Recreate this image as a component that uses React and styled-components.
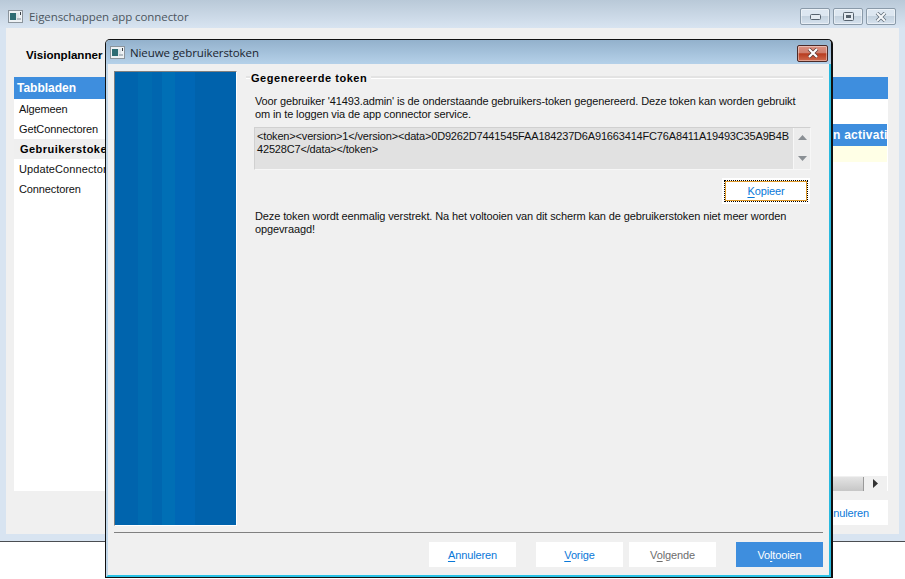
import React from "react";
import styled, { createGlobalStyle } from "styled-components";

const Global = createGlobalStyle`
  html, body { margin: 0; padding: 0; background: #fff; overflow: hidden; }
  #root { width: 905px; height: 579px; position: relative; overflow: hidden; }
  * { box-sizing: border-box; }
`;
const uiFont = `"Liberation Sans", Arial, sans-serif`;
const titleFont = `"Open Sans", "Noto Sans", sans-serif`;

const Page = styled.div`
  width: 905px; height: 579px; position: relative; background: #fff;
  font-family: ${uiFont}; font-size: 11px; letter-spacing: -0.12px; color: #111;
`;
const OuterWindow = styled.div`
  width: 905px; height: 542px; display: flex; flex-direction: column;
  background: #d8e4f1; border-bottom: 1px solid #4a4d52;
`;
const TitleBar = styled.div`
  height: 28px; flex: none; display: flex; align-items: center;
  background: linear-gradient(#b9c9d8, #d8e4f1);
  padding: 5px 9px 0 8px;
`;
const TitleText = styled.span`
  font-family: ${titleFont}; font-size: 11.5px; letter-spacing: -0.08px; margin-left: 6px; color: #4c5660; flex: 1;
`;
const Controls = styled.div`display: flex; gap: 3px;`;
const Ctrl = styled.div`
  width: 30px; height: 17px; border: 1px solid #8a9aa9; border-radius: 2px;
  background: linear-gradient(#dde7f1 45%, #c4d2df 50%, #d6e2ee);
  display: flex; align-items: center; justify-content: center;
  box-shadow: inset 0 0 0 1px rgba(255,255,255,.45);
`;
const OuterBody = styled.div`
  flex: 1; margin: 0 6px 7px; background: #f0f0f0;
  padding: 0 11px 9px 8px; display: flex; flex-direction: column;
`;
const PlannerLabel = styled.div`
  height: 49px; padding: 20px 0 0 12px; font-weight: 700; font-size: 11.6px; letter-spacing: 0; color: #000; line-height: 14px;
`;
const Panels = styled.div`
  height: 414px; background: #fff; display: flex; flex-direction: column; position: relative;
`;
const BlueHead = styled.div`
  height: 22px; flex: none; background: #3e8ede; color: #fff; font-weight: 700;
  font-size: 12px; letter-spacing: 0; line-height: 22px; padding-left: 3px;
`;
const Columns = styled.div`flex: 1; display: flex; min-height: 0;`;
const TabList = styled.div`width: 90px; flex: none; display: flex; flex-direction: column;`;
const Tab = styled.div`
  height: 20px; line-height: 20px; padding-left: 5px; white-space: nowrap; color: #111;
  ${p => p.$spread && `letter-spacing: 0.1px;`}
  ${p => p.$active && `background: #efefef; font-weight: 700; color: #000; letter-spacing: 0.45px; padding-left: 6px; margin-right: -30px;`}
`;
const GridArea = styled.div`flex: 1; display: flex; flex-direction: column; padding: 25px 0 0 728px; min-width: 0;`;
const GridHead = styled.div`
  height: 22px; flex: none; background: #3e8ede; color: #fff; font-weight: 700; font-size: 12px;
  letter-spacing: 0.25px; line-height: 22px; white-space: nowrap; overflow: hidden; margin-right: 1px; padding-left: 1px;
`;
const GridRow = styled.div`height: 16px; flex: none; background: #ffffe6; margin-right: 1px;`;
const GridFill = styled.div`flex: 1;`;
const HScroll = styled.div`
  height: 15px; flex: none; margin-right: 1px; background: #f0f0f0; display: flex; align-items: center;
`;
const HThumb = styled.div`
  flex: 1; height: 14px; background: linear-gradient(#e4e4e4, #c6c6c6); border-right: 1px solid #9a9a9a;
`;
const HArrow = styled.div`width: 23px; display: flex; align-items: center; justify-content: center;`;
const OuterFooter = styled.div`
  margin-top: 9px; height: 25px; display: flex; justify-content: flex-end;
`;
const Button = styled.div`
  width: 87px; height: 25px; display: flex; align-items: center; justify-content: center;
  background: ${p => p.$primary ? "#3e8ede" : "#fff"};
  color: ${p => p.$primary ? "#fff" : p.$disabled ? "#6d6d6d" : "#0a78d8"};
  u { text-underline-offset: 2px; }
`;

const Modal = styled.div`
  position: absolute; left: 105px; top: 39px; width: 728px; height: 539px;
  border: 1px solid #111; border-width: 1px 2px 1px 1px; border-radius: 5px 5px 0 0;
  display: flex; flex-direction: column;
  background: #f0f0f0;
`;
const ModalTitle = styled.div`
  height: 24px; flex: none; display: flex; align-items: center;
  background: linear-gradient(#93b1cc, #b5d1e9);
  border-radius: 4px 4px 0 0; padding: 0 3px 0 4px;
`;
const ModalTitleText = styled.span`
  font-family: ${titleFont}; font-size: 11.5px; letter-spacing: -0.1px; margin-left: 5px; color: #1b2530; flex: 1;
`;
const RedClose = styled.div`
  width: 31px; height: 17px; margin-top: 2px; border: 1px solid #4b2a28; border-radius: 2px;
  background: linear-gradient(#dc9182 0, #cf7e6c 45%, #b83c1f 52%, #cf6a4e 100%);
  box-shadow: inset 0 0 0 1px rgba(255,255,255,.4);
  display: flex; align-items: center; justify-content: center;
`;
const ModalInner = styled.div`
  flex: 1; display: flex; flex-direction: column; min-height: 0;
  border-left: 2px solid #c3d8ea; border-right: 2px solid #29b9de; border-bottom: 2px solid #29c3e6;
`;
const WizardBody = styled.div`
  height: 468px; flex: none; display: flex; padding: 7px 6px 0 6px;
`;
const Banner = styled.div`
  width: 123px; height: 455px; flex: none; border: 1px solid; border-color: #808080 #fff #fff #808080;
  background: linear-gradient(90deg,
    #0064ad 0 23px, #006bb0 23px 37px, #0066af 37px 47px, #006fb5 47px 60px,
    #0067b5 60px 80px, #0062ac 80px);
`;
const Content = styled.div`flex: 1; padding: 0 0 0 9px; min-width: 0; display: flex; flex-direction: column;`;
const GroupHead = styled.div`
  display: flex; align-items: center; height: 13px; gap: 1px;
  &::before { content: ""; width: 4px; height: 2px; background: #e3e3e3; border-bottom: 1px solid #fff; }
  &::after { content: ""; flex: 1; height: 2px; background: #e3e3e3; border-bottom: 1px solid #fff; margin-left: 3px; }
`;
const GroupTitle = styled.span`font-weight: 700; font-size: 11px; letter-spacing: 0.55px; color: #000;`;
const Para = styled.p`
  margin: ${p => p.$mt || 0}px 0 0 9px; line-height: 13px; color: #111; white-space: pre;
`;
const TokenBox = styled.div`
  margin: 6px 12px 0 8px; height: 43px; display: flex; background: #e1e1e1;
  border: 1px solid; border-color: #d0d0d0 #f7f7f7 #f7f7f7 #d0d0d0;
`;
const TokenText = styled.div`
  flex: 1; padding: 2px 0 0 2px; line-height: 13px; color: #111; white-space: pre; min-width: 0; letter-spacing: -0.17px;
`;
const VScroll = styled.div`
  width: 17px; flex: none; background: #ececec; border-left: 1px solid #f7f7f7;
  display: flex; flex-direction: column; align-items: center; justify-content: space-between; padding: 7px 0 8px;
`;
const FocusRow = styled.div`display: flex; justify-content: flex-end; margin: 10px 15px 0 0;`;
const FocusButton = styled.div`
  width: 84px; height: 22px; background: #fff; color: #0a78d8; outline: 2px solid #fff;
  border: 1px dotted #000; box-shadow: 0 0 0 1px #e09a2a inset;
  display: flex; align-items: center; justify-content: center;
  u { text-underline-offset: 2px; }
`;
const Separator = styled.div`
  height: 1px; flex: none; background: #808080; margin: 0 6px;
`;
const WizardFooter = styled.div`
  flex: 1; display: flex; justify-content: flex-end; padding: 9px 6px 0 0;
`;
const GapButton = styled(Button)`margin-left: ${p => p.$ml || 0}px;`;

const WinIcon = () => (
  <svg width="15" height="13" viewBox="0 0 15 13">
    <rect x="0.5" y="0.5" width="14" height="12" fill="#eef2f5" stroke="#8b949c" />
    <rect x="2" y="3" width="6" height="7" fill="#2e6c73" />
    <rect x="8" y="3" width="3" height="7" fill="#dfe6ea" />
    <rect x="12" y="2" width="1" height="3" fill="#3a3f45" />
    <rect x="9" y="8" width="4" height="2" fill="#b4bdc4" />
  </svg>
);
const XGlyph = ({ color = "#fff", stroke = "#555" }) => (
  <svg width="12" height="10" viewBox="0 0 12 10">
    <path d="M2 1l8 8M10 1L2 9" fill="none" stroke={stroke} strokeWidth="3.6" />
    <path d="M2 1l8 8M10 1L2 9" fill="none" stroke={color} strokeWidth="2.2" />
  </svg>
);
const Tri = ({ dir }) => (
  <svg width="9" height="5" viewBox="0 0 9 5">
    <path d={dir === "up" ? "M4.5 0L9 5H0z" : "M0 0h9L4.5 5z"} fill="#8a8f94" />
  </svg>
);

export default function App() {
  return (
    <Page>
      <Global />
      <OuterWindow>
        <TitleBar>
          <WinIcon />
          <TitleText>Eigenschappen app connector</TitleText>
          <Controls>
            <Ctrl>
              <svg width="11" height="6" viewBox="0 0 11 6"><rect x=".5" y=".5" width="10" height="5" rx="1" fill="#e4ebf2" stroke="#56626e" /></svg>
            </Ctrl>
            <Ctrl>
              <svg width="11" height="9" viewBox="0 0 11 9"><rect x=".5" y=".5" width="10" height="8" rx="1" fill="#e4ebf2" stroke="#56626e" /><rect x="3" y="3" width="5" height="3" fill="#56626e" /></svg>
            </Ctrl>
            <Ctrl><XGlyph color="#f4f7fa" stroke="#5d6a76" /></Ctrl>
          </Controls>
        </TitleBar>
        <OuterBody>
          <PlannerLabel>Visionplanner</PlannerLabel>
          <Panels>
            <BlueHead>Tabbladen</BlueHead>
            <Columns>
              <TabList>
                <Tab>Algemeen</Tab>
                <Tab>GetConnectoren</Tab>
                <Tab $active>Gebruikerstokens</Tab>
                <Tab $spread>UpdateConnectoren</Tab>
                <Tab>Connectoren</Tab>
              </TabList>
              <GridArea>
                <GridHead>n activation</GridHead>
                <GridRow />
                <GridFill />
                <HScroll>
                  <HThumb />
                  <HArrow>
                    <svg width="5" height="9" viewBox="0 0 5 9"><path d="M0 0l5 4.5L0 9z" fill="#333" /></svg>
                  </HArrow>
                </HScroll>
              </GridArea>
            </Columns>
          </Panels>
          <OuterFooter>
            <Button>Annuleren</Button>
          </OuterFooter>
        </OuterBody>
      </OuterWindow>

      <Modal>
        <ModalTitle>
          <WinIcon />
          <ModalTitleText>Nieuwe gebruikerstoken</ModalTitleText>
          <RedClose><XGlyph color="#fff" stroke="#5a3a36" /></RedClose>
        </ModalTitle>
        <ModalInner>
          <WizardBody>
            <Banner />
            <Content>
              <GroupHead><GroupTitle>Gegenereerde token</GroupTitle></GroupHead>
              <Para $mt={11}>{"Voor gebruiker '41493.admin' is de onderstaande gebruikers-token gegenereerd. Deze token kan worden gebruikt\nom in te loggen via de app connector service."}</Para>
              <TokenBox>
                <TokenText>{"<token><version>1</version><data>0D9262D7441545FAA184237D6A91663414FC76A8411A19493C35A9B4B\n42528C7</data></token>"}</TokenText>
                <VScroll><Tri dir="up" /><Tri dir="down" /></VScroll>
              </TokenBox>
              <FocusRow><FocusButton><span><u>K</u>opieer</span></FocusButton></FocusRow>
              <Para $mt={8}>{"Deze token wordt eenmalig verstrekt. Na het voltooien van dit scherm kan de gebruikerstoken niet meer worden\nopgevraagd!"}</Para>
            </Content>
          </WizardBody>
          <Separator />
          <WizardFooter>
            <Button><span><u>A</u>nnuleren</span></Button>
            <GapButton $ml={20}><span><u>V</u>orige</span></GapButton>
            <GapButton $ml={6} $disabled><span>V<u>o</u>lgende</span></GapButton>
            <GapButton $ml={20} $primary><span>Vo<u>l</u>tooien</span></GapButton>
          </WizardFooter>
        </ModalInner>
      </Modal>
    </Page>
  );
}
